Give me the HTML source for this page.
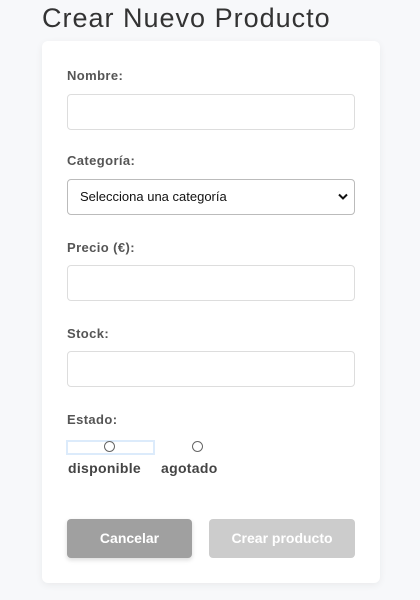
<!DOCTYPE html>
<html><head><meta charset="utf-8"><style>
body{margin:0;width:420px;height:600px;background:#f7f8fa;font-family:"Liberation Sans",sans-serif;position:relative;overflow:hidden}
.a{position:absolute}
h1{position:absolute;left:42px;top:3px;margin:0;font-size:27px;font-weight:400;color:#333;letter-spacing:1px}
.card{left:42px;top:41px;width:338px;height:542px;background:#fff;border-radius:6px;box-shadow:0 2px 8px rgba(0,0,0,0.06)}
.lbl{left:67px;font-size:13px;font-weight:bold;color:#555;letter-spacing:0.4px}
.in{left:67px;width:286px;height:34px;border:1px solid #ddd;border-radius:4px;background:#fff}
.sel{font-size:13px;color:#111;line-height:34px;padding-left:12px;width:274px}
.rad{width:9px;height:9px;border:1px solid #666;border-radius:50%;background:#fff}
.btn{top:519px;height:39px;border-radius:4px;color:#fff;font-weight:bold;font-size:14px;text-align:center;line-height:39px}
.rl{font-size:14px;font-weight:bold;color:#444;top:460px;letter-spacing:0.3px}
</style></head><body>
<h1>Crear Nuevo Producto</h1>
<div class="a card"></div>
<div class="a lbl" style="top:68px">Nombre:</div>
<div class="a in" style="top:94px"></div>
<div class="a lbl" style="top:153px">Categoría:</div>
<div class="a in sel" style="top:179px;border-color:#bbb">Selecciona una categoría
<svg class="a" style="right:6px;top:13px" width="10" height="8" viewBox="0 0 10 8"><path d="M1 1.5L5 5.5L9 1.5" stroke="#111" stroke-width="2" fill="none"/></svg></div>
<div class="a lbl" style="top:240px">Precio (€):</div>
<div class="a in" style="top:265px"></div>
<div class="a lbl" style="top:326px">Stock:</div>
<div class="a in" style="top:351px"></div>
<div class="a lbl" style="top:412px">Estado:</div>
<div class="a" style="left:66px;top:440px;width:85px;height:11px;border:2px solid #dcebfb"></div>
<div class="a rad" style="left:104px;top:441px"></div>
<div class="a rad" style="left:192px;top:441px"></div>
<div class="a rl" style="left:68px">disponible</div>
<div class="a rl" style="left:161px">agotado</div>
<div class="a btn" style="left:67px;width:125px;background:#a0a0a0;box-shadow:0 2px 5px rgba(0,0,0,0.15)">Cancelar</div>
<div class="a btn" style="left:209px;width:146px;background:#cccccc">Crear producto</div>
</body></html>
